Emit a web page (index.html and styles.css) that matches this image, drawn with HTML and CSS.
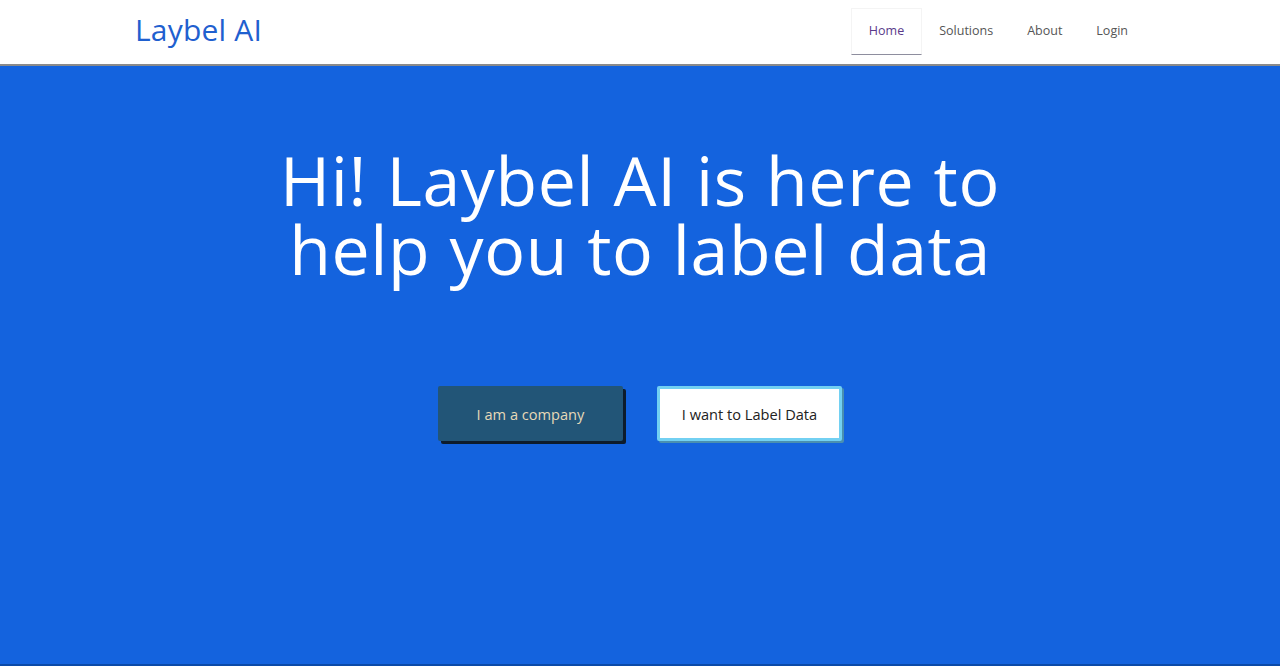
FILE: index.html
```html
<!DOCTYPE html>
<html lang="en">
<head>
<meta charset="utf-8">
<title>Laybel AI</title>
<link rel="stylesheet" href="styles.css">
</head>
<body>
<header class="topbar">
  <div class="topbar-inner">
    <a class="brand" href="#">Laybel AI</a>
    <nav class="nav">
      <a class="nav-link active" href="#">Home</a>
      <a class="nav-link" href="#">Solutions</a>
      <a class="nav-link" href="#">About</a>
      <a class="nav-link" href="#">Login</a>
    </nav>
  </div>
</header>
<main class="hero">
  <h1 class="hero-title">Hi! Laybel AI is here to<br>help you to label data</h1>
  <div class="actions">
    <a class="btn btn-company" href="#">I am a company</a>
    <a class="btn btn-label" href="#">I want to Label Data</a>
  </div>
</main>
</body>
</html>
```
FILE: styles.css
```css
* { box-sizing: border-box; }
html, body { margin: 0; padding: 0; height: 100%; }
body {
  font-family: "Open Sans", "Lato", sans-serif;
  background: #1463de;
  display: flex;
  flex-direction: column;
  height: 666px;
  overflow: hidden;
}
a { text-decoration: none; }

.topbar {
  background: #fff;
  height: 66px;
  border-bottom: 2px solid #8a8a8a;
  flex: none;
}
.topbar-inner {
  height: 64px;
  padding: 0 135px 0 135px;
  display: flex;
  align-items: center;
  justify-content: space-between;
}
.brand {
  color: #1f60cf;
  font-family: "Open Sans", sans-serif;
  font-size: 30px;
  letter-spacing: 0.2px;
  margin-top: -6px;
}
.nav {
  display: flex;
  align-self: stretch;
  padding-top: 8px;
  padding-bottom: 9px;
}
.nav-link {
  display: flex;
  align-items: center;
  padding: 0 17px 2px;
  font-size: 12.5px;
  color: #555;
  border-bottom: 1px solid transparent;
}
.nav-link.active {
  color: #5a3a8a;
  border: 1px solid #f4f4f4;
  border-bottom: 1px solid #8e8e9e;
}

.hero {
  flex: 1;
  display: flex;
  flex-direction: column;
  align-items: center;
  border-bottom: 2px solid #0b4aa8;
}
.hero-title {
  margin: 79px 0 0;
  color: #fff;
  font-weight: 400;
  font-size: 68px;
  line-height: 69px;
  letter-spacing: 0.6px;
  word-spacing: 1px;
  text-align: center;
}
.actions {
  display: flex;
  gap: 34px;
  margin-top: 103px;
}
.btn {
  width: 185px;
  height: 55px;
  display: flex;
  align-items: center;
  justify-content: center;
  font-size: 14.6px;
  border-radius: 2px;
}
.btn-company {
  background: #225577;
  color: #e6d9b8;
  box-shadow: 3px 3px 0 #0d1c2c;
}
.btn-label {
  background: #fff;
  color: #222;
  border: 3px solid #72d0f2;
  box-shadow: 2px 2px 0 #4a90b0;
}
```
